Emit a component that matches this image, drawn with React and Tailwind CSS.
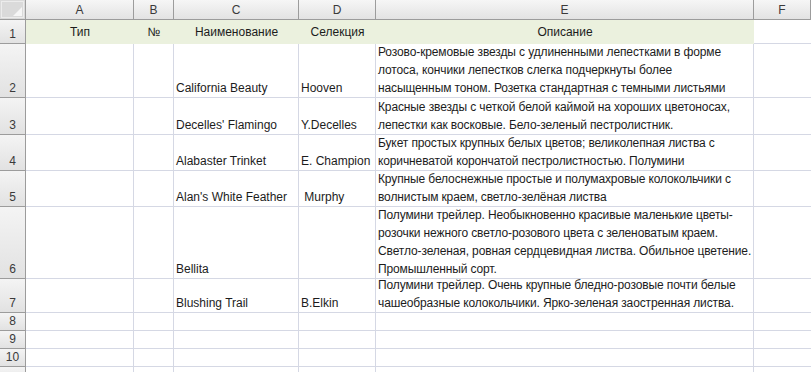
const cols = ["A", "B", "C", "D", "E", "F"];

const rows = [
  {
    name: "California Beauty",
    sel: "Hooven",
    desc: [
      "Розово-кремовые звезды с удлиненными лепестками в форме",
      "лотоса, кончики лепестков слегка подчеркнуты более",
      "насыщенным тоном. Розетка стандартная с темными листьями",
    ],
  },
  {
    name: "Decelles' Flamingo",
    sel: "Y.Decelles",
    desc: [
      "Красные звезды с четкой белой каймой на хороших цветоносах,",
      "лепестки как восковые. Бело-зеленый пестролистник.",
    ],
  },
  {
    name: "Alabaster Trinket",
    sel: "E. Champion",
    desc: [
      "Букет простых крупных белых цветов; великолепная листва с",
      "коричневатой корончатой пестролистностью. Полумини",
    ],
  },
  {
    name: "Alan's White Feather",
    sel: "\u00a0Murphy",
    desc: [
      "Крупные белоснежные простые и полумахровые колокольчики с",
      "волнистым краем, светло-зелёная листва",
    ],
  },
  {
    name: "Bellita",
    sel: "",
    desc: [
      "Полумини трейлер. Необыкновенно красивые маленькие цветы-",
      "розочки нежного светло-розового цвета с зеленоватым краем.",
      "Светло-зеленая, ровная сердцевидная листва. Обильное цветение.",
      "Промышленный сорт.",
    ],
  },
  {
    name: "Blushing Trail",
    sel: "B.Elkin",
    desc: [
      "Полумини трейлер. Очень крупные бледно-розовые почти белые",
      "чашеобразные колокольчики. Ярко-зеленая заостренная листва.",
    ],
  },
];

const rowHead =
  "flex items-end justify-center border-r border-b border-[#9c9c9c] bg-gradient-to-b from-[#f4f4f4] to-[#e2e2e2] text-[#3a3a3a] leading-[18px]";
const cell =
  "flex flex-col justify-end overflow-hidden border-r border-b border-[#d5d8e4] px-[2px] leading-[18px] whitespace-nowrap";
const head1 = "flex items-end justify-center bg-[#ebf1de] leading-[18px] pb-[3px]";

export default function App() {
  return (
    <div className="w-[811px] h-[372px] overflow-hidden bg-white font-['Liberation_Sans',Arial,sans-serif] text-[12px] text-[#1c1c1c]">
      <div className="grid grid-cols-[26px_108px_40px_125px_77px_378px_1fr] grid-rows-[20px_24px_54px_37px_36px_36px_72px_34px_18px_18px_18px_18px]">
        {/* corner */}
        <div className="relative border-r border-b border-[#9c9c9c] bg-[#dadada]">
          <div className="absolute inset-[1px] border border-[#ececec]" />
          <svg className="absolute right-[3px] bottom-[3px]" width="9" height="9" viewBox="0 0 9 9">
            <polygon points="9,0 9,9 0,9" fill="#f6f6f6" />
          </svg>
        </div>
        {cols.map((c) => (
          <div
            key={c}
            className="flex items-center justify-center border-r border-b border-[#9c9c9c] bg-gradient-to-b from-[#f6f6f6] to-[#e3e3e3] text-[#3a3a3a]"
          >
            {c}
          </div>
        ))}

        {/* row 1 */}
        <div className={rowHead}>1</div>
        <div className={head1}>Тип</div>
        <div className={head1}>№</div>
        <div className={head1}>Наименование</div>
        <div className={head1}>Селекция</div>
        <div className={head1}>Описание</div>
        <div className="border-b border-[#d5d8e4]" />

        {rows.map((r, i) => (
          <div key={r.name} className="contents">
            <div className={rowHead}>{i + 2}</div>
            <div className={cell} />
            <div className={cell} />
            <div className={cell}>{r.name}</div>
            <div className={cell}>{r.sel}</div>
            <div className={cell + " tracking-[-0.12px]"}>
              {r.desc.map((l) => (
                <div key={l}>{l}</div>
              ))}
            </div>
            <div className="border-b border-[#d5d8e4]" />
          </div>
        ))}

        {[8, 9, 10, ""].map((n) => (
          <div key={"r" + n} className="contents">
            <div className={rowHead}>{n}</div>
            <div className={cell} />
            <div className={cell} />
            <div className={cell} />
            <div className={cell} />
            <div className={cell} />
            <div className="border-b border-[#d5d8e4]" />
          </div>
        ))}
      </div>
    </div>
  );
}
